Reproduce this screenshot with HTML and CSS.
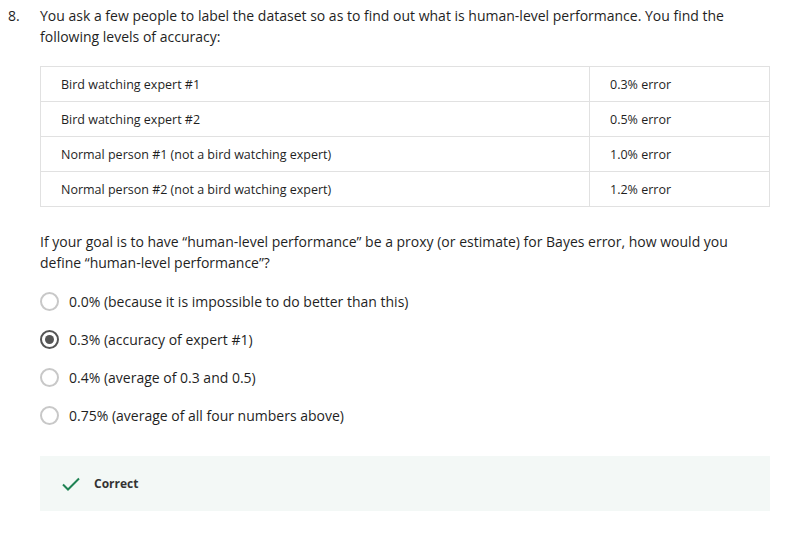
FILE: index.html
```html
<!DOCTYPE html>
<html>
<head>
<meta charset="utf-8">
<link rel="stylesheet" href="styles.css">
</head>
<body>
<div class="question">
  <div class="num">8.</div>
  <div class="body">
    <p class="prompt">You ask a few people to label the dataset so as to find out what is human-level performance. You find the following levels of accuracy:</p>
    <table class="levels">
      <tr><td class="who">Bird watching expert #1</td><td class="err">0.3% error</td></tr>
      <tr><td class="who">Bird watching expert #2</td><td class="err">0.5% error</td></tr>
      <tr><td class="who">Normal person #1 (not a bird watching expert)</td><td class="err">1.0% error</td></tr>
      <tr><td class="who">Normal person #2 (not a bird watching expert)</td><td class="err">1.2% error</td></tr>
    </table>
    <p class="prompt q2">If your goal is to have “human-level performance” be a proxy (or estimate) for Bayes error, how would you define “human-level performance”?</p>
    <div class="options">
      <div class="opt"><span class="radio"></span><span>0.0% (because it is impossible to do better than this)</span></div>
      <div class="opt"><span class="radio on"></span><span>0.3% (accuracy of expert #1)</span></div>
      <div class="opt"><span class="radio"></span><span>0.4% (average of 0.3 and 0.5)</span></div>
      <div class="opt"><span class="radio"></span><span>0.75% (average of all four numbers above)</span></div>
    </div>
    <div class="feedback">
      <svg class="check" width="18" height="14" viewBox="0 0 18 14"><path d="M1 7.5 L6 12.5 L17 1.5" fill="none" stroke="#1f8354" stroke-width="2"/></svg>
      <span class="fb-text">Correct</span>
    </div>
  </div>
</div>
</body>
</html>
```
FILE: styles.css
```css
html, body { margin: 0; padding: 0; background: #fff; }
body { font-family: "Open Sans", "Noto Sans", sans-serif; color: #1f1f1f; }
.question { display: flex; padding: 5px 32px 0 8px; }
.num { width: 32px; flex: none; font-size: 14px; line-height: 21px; }
.body { flex: 1; }
.prompt { margin: 0; font-size: 14px; line-height: 21px; }
.levels { width: 730px; border-collapse: collapse; margin-top: 19px; font-size: 12.5px; }
.levels td { border: 1px solid #e1e1e1; height: 34px; padding: 0 0 0 20px; vertical-align: middle; }
.levels td.who { width: 528px; }
.q2 { margin-top: 24px; }
.options { margin-top: 18px; display: flex; flex-direction: column; gap: 17px; }
.opt { display: flex; align-items: center; font-size: 14px; line-height: 21px; gap: 10px; }
.radio { width: 15px; height: 15px; border: 2px solid #c8c8c8; border-radius: 50%; box-sizing: content-box; flex: none; position: relative; }
.radio.on { border-color: #555; }
.radio.on::after { content: ""; position: absolute; left: 3px; top: 3px; width: 9px; height: 9px; border-radius: 50%; background: #555; }
.feedback { margin-top: 30px; width: 730px; height: 55px; background: #f3f8f6; display: flex; align-items: center; padding-left: 22px; box-sizing: border-box; gap: 14px; }
.fb-text { font-size: 12px; font-weight: 700; color: #333; }
```
